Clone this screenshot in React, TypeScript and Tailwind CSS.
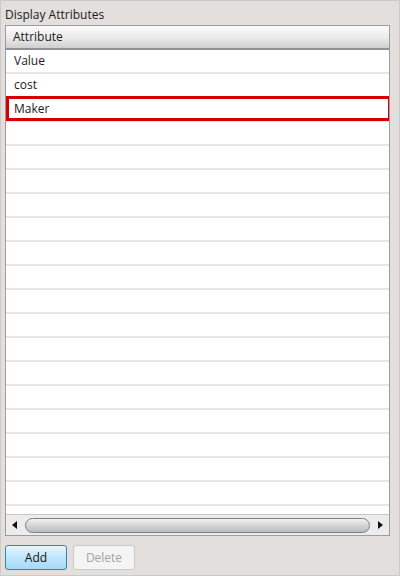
import React from 'react'

const rows = ['Value', 'cost', 'Maker', '', '', '', '', '', '', '', '', '', '', '', '', '', '', '', '', '', '']

export default function App() {
  return (
    <div
      className="flex h-[576px] w-[400px] flex-col border border-[#cdc9c7] bg-[#e3dfdd] px-[4px] text-[12px] text-[#1b1b1b]"
      style={{ fontFamily: '"Open Sans", "Noto Sans", sans-serif' }}
    >
      <div className="h-[24px] pt-[6px] leading-[16px]">Display Attributes</div>

      {/* grid */}
      <div className="flex h-[511px] w-[385px] flex-col border border-[#9a9ea4] bg-white">
        <div className="flex h-[24px] shrink-0 items-center border-b-2 border-[#8f9196] bg-gradient-to-b from-[#fbfbfb] via-[#ececec] to-[#cfcfcf] pl-[7px]">
          Attribute
        </div>

        <div className="flex-1 overflow-hidden">
          {rows.map((r, i) => (
            <div key={i} className="relative flex h-[24px] items-center border-b-2 border-[#e6e6e6] pl-[8px]">
              {r}
              {r === 'Maker' && (
                <div className="absolute -top-[2px] left-0 right-[-2px] h-[25px] border-[3px] border-[#d40000]" />
              )}
            </div>
          ))}
        </div>

        {/* horizontal scrollbar */}
        <div className="flex h-[21px] shrink-0 items-center border-t border-[#c8c8c8] bg-[#ececec] px-[5px]">
          <svg width="8" height="8" viewBox="0 0 8 8" className="shrink-0">
            <path d="M6 0 L1 4 L6 8 Z" fill="#111" />
          </svg>
          <div className="mx-[6px] h-[15px] flex-1 rounded-full border border-[#7c7f85] bg-gradient-to-b from-[#f2f2f2] via-[#d4d4d4] to-[#bdbdbd]" />
          <svg width="8" height="8" viewBox="0 0 8 8" className="shrink-0">
            <path d="M2 0 L7 4 L2 8 Z" fill="#111" />
          </svg>
        </div>
      </div>

      {/* buttons */}
      <div className="mt-[9px] flex gap-[6px]">
        <button className="flex h-[25px] w-[62px] items-center justify-center rounded-[3px] border border-[#3c7fb1] bg-gradient-to-b from-[#eaf6fd] via-[#bee6fd] to-[#a7d9f5] text-[12px] text-[#111]">
          Add
        </button>
        <button className="flex h-[25px] w-[62px] items-center justify-center rounded-[3px] border border-[#c9c9c9] bg-[#f4f4f4] text-[12px] text-[#a3a3a3]">
          Delete
        </button>
      </div>
    </div>
  )
}
